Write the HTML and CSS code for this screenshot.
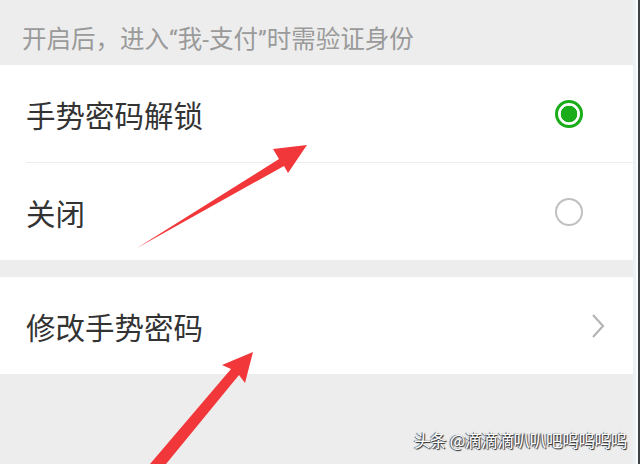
FILE: index.html
```html
<!DOCTYPE html>
<html lang="zh-CN">
<head>
    <meta charset="UTF-8">
    <meta name="viewport" content="width=device-width, initial-scale=1.0">
    <title>手势密码</title>
    <link rel="stylesheet" href="styles.css">
</head>
<body>
<div class="frame">
    <div class="screen">
        <p class="tip">开启后，进入“我-支付”时需验证身份</p>

        <div class="list">
            <div class="cell">
                <span class="label">手势密码解锁</span>
                <span class="radio checked"></span>
            </div>
            <div class="cell">
                <span class="label">关闭</span>
                <span class="radio"></span>
            </div>
        </div>

        <div class="list gap">
            <div class="cell">
                <span class="label">修改手势密码</span>
                <svg class="chevron" width="14" height="26" viewBox="0 0 14 26">
                    <path d="M2 2 L12 13 L2 24" fill="none" stroke="#b5b5b5" stroke-width="2.2"/>
                </svg>
            </div>
        </div>

        <div class="mark">头条 @滴滴滴叭叭吧呜呜呜呜</div>

        <!-- annotation arrows -->
        <svg class="arrows" width="633" height="464" viewBox="0 0 633 464">
            <path d="M137 248 L279 159 L273 149 L307 145 L288 173 L284 166 Z" fill="#f2373a"/>
            <path d="M150 464 L166 464 L239 375 L245 383 L253 352 L222 365 L231 369 Z" fill="#f2373a"/>
        </svg>
    </div>
    <div class="edge"></div>
</div>
</body>
</html>
```

FILE: styles.css
```css
/* -------- WeChat settings page -------- */
:root {
    --bg: #ededed;
    --line: #ececec;
    --green: #1aad19;
    --text: #333333;
}
body {
    margin: 0;
    font-family: "Noto Sans CJK SC", "Noto Sans", sans-serif;
    background: var(--bg);
}
.frame {
    display: flex;
    width: 640px;
    height: 464px;
    overflow: hidden;
}
.screen {
    position: relative;
    flex: 1;
    background: var(--bg);
}
.edge {
    width: 7px;
    background: linear-gradient(to right, #eef1f4 0 3px, #fbfbfc 3px 5px, #3d4246 5px);
}
.tip {
    margin: 0;
    height: 65px;
    padding: 10px 0 0 22px;
    box-sizing: border-box;
    display: flex;
    align-items: center;
    font-family: Roboto, "Noto Sans CJK SC", sans-serif;
    font-size: 24.5px;
    color: #9a9a9a;
    white-space: pre;
}
.list { background: #fff; }
.list.gap { margin-top: 17px; }
.cell {
    display: flex;
    align-items: center;
    justify-content: space-between;
    height: 97px;
    margin-left: 26px;
    padding-right: 50px;
    box-sizing: border-box;
}
.cell + .cell {
    border-top: 1px solid var(--line);
    height: 98px;
}
.label {
    font-size: 29.5px;
    color: var(--text);
}
.radio {
    width: 24px;
    height: 24px;
    border: 2px solid #c0c0c0;
    border-radius: 50%;
    box-sizing: content-box;
}
.radio.checked {
    border: 3px solid var(--green);
    width: 22px;
    height: 22px;
    background: radial-gradient(circle, var(--green) 0 8px, #fff 8.6px);
}
.chevron { margin-right: -22px; }
.mark {
    position: absolute;
    right: 6px;
    bottom: 12px;
    font-size: 16.5px;
    color: #fff;
    text-shadow: 1px 1px 1px #222, -1px 0 1px #444;
    letter-spacing: -0.3px;
}
.arrows {
    position: absolute;
    left: 0;
    top: 0;
}
```
